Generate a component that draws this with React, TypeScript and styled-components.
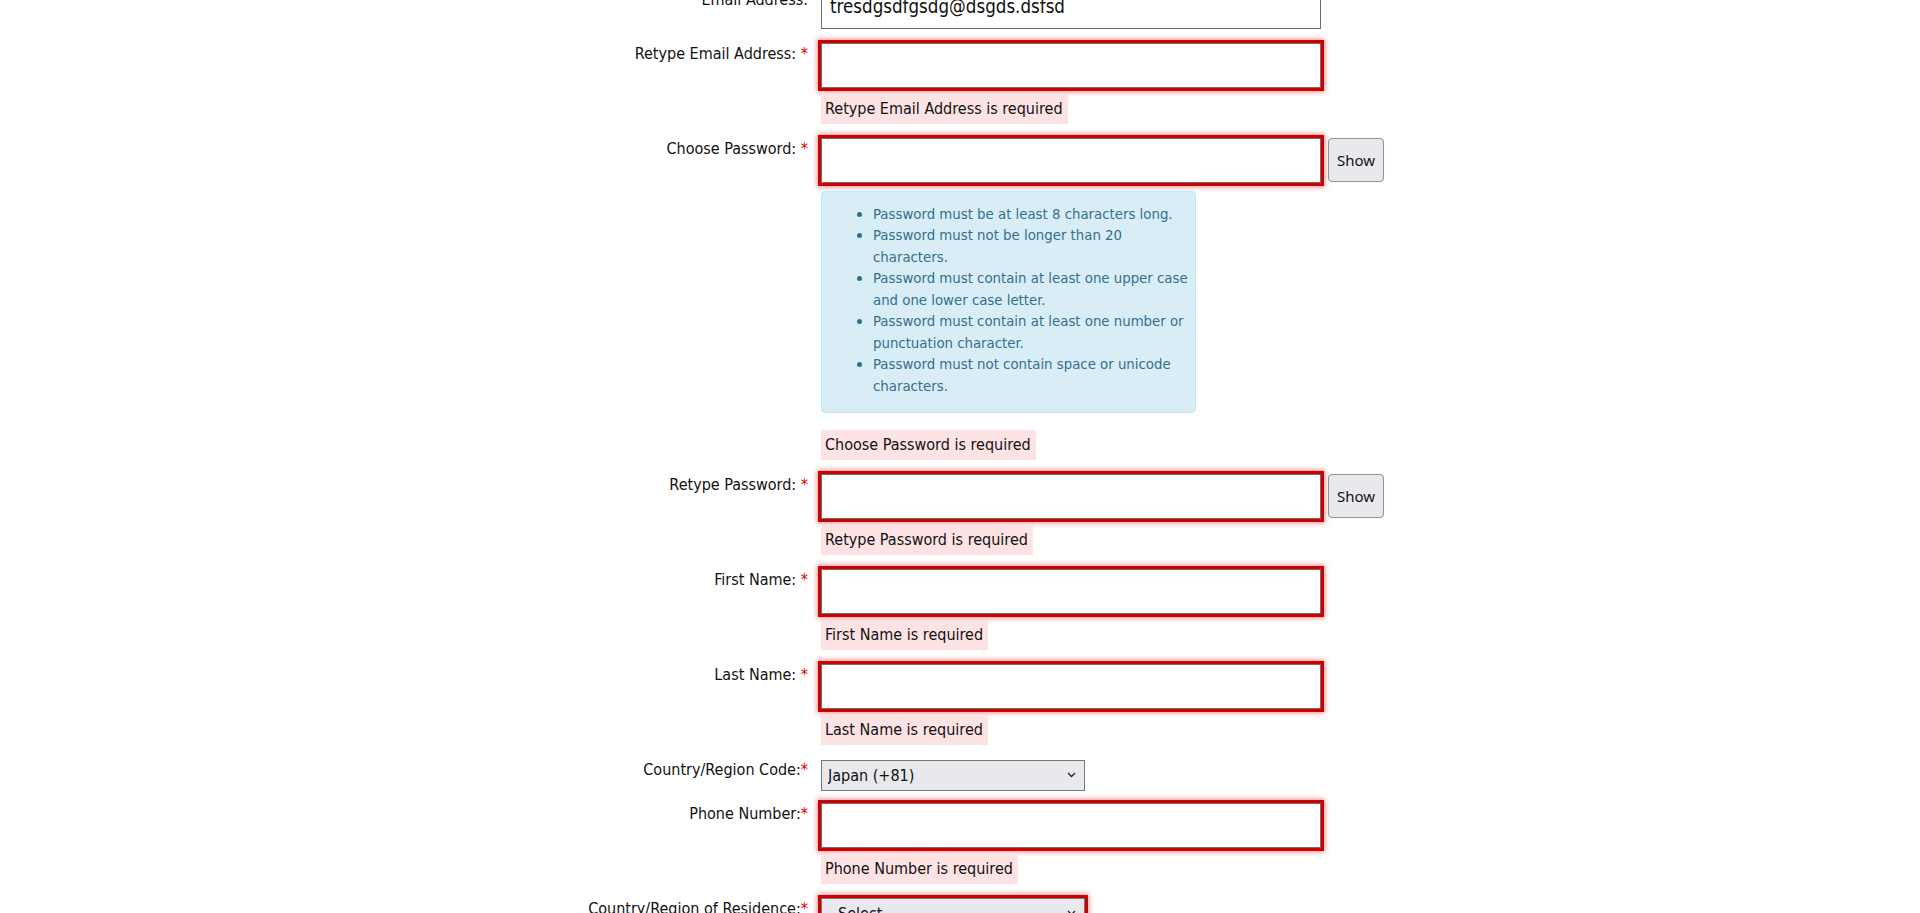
import React from "react";
import styled, { createGlobalStyle, css } from "styled-components";

const GlobalStyle = createGlobalStyle`
  html, body { margin: 0; padding: 0; background: #ffffff; }
  body {
    font-family: "DejaVu Sans Condensed", "DejaVu Sans", sans-serif;
    color: #111111;
    overflow: hidden;
  }
`;

const Page = styled.div`
  width: 1920px;
  height: 913px;
  overflow: hidden;
`;

const Form = styled.form`
  display: flex;
  flex-direction: column;
  margin-top: -16px;
`;

const Row = styled.div<{ $after?: number }>`
  display: grid;
  grid-template-columns: 808px auto;
  column-gap: 13px;
  align-items: start;
  margin-bottom: ${(p) => p.$after ?? 14}px;
`;

const Label = styled.label<{ $top?: number }>`
  text-align: right;
  font-size: 16px;
  line-height: 22px;
  padding-top: ${(p) => p.$top ?? 0}px;
  color: #111111;
`;

const Req = styled.span`
  color: #e00000;
`;

const Field = styled.div`
  display: flex;
  flex-direction: column;
  align-items: flex-start;
  gap: 6px;
`;

const InputLine = styled.div`
  display: flex;
  align-items: flex-start;
  gap: 7px;
`;

const invalidRing = css`
  box-shadow: 0 0 0 3px #cf0000, 0 0 5px 4px rgba(214, 0, 0, 0.45);
`;

const TextInput = styled.input<{ $invalid?: boolean }>`
  box-sizing: border-box;
  width: 500px;
  height: 45px;
  border: 1px solid #6f6f6f;
  padding: 0 8px;
  font-family: inherit;
  font-size: 18.6px;
  color: #111111;
  background: #ffffff;
  outline: none;
  ${(p) => p.$invalid && invalidRing}
`;

const ShowButton = styled.button`
  box-sizing: border-box;
  width: 56px;
  height: 44px;
  padding: 0;
  background: #e9e9ed;
  border: 1px solid #8f8f9d;
  border-radius: 4px;
  font-family: "Noto Sans", "Open Sans", sans-serif;
  font-size: 15px;
  color: #111111;
`;

const Info = styled.div`
  box-sizing: border-box;
  width: 375px;
  margin: 2px 0 11px;
  padding: 11px 4px 6px 11px;
  background: #d9edf7;
  border: 1px solid #bce8f1;
  border-radius: 4px;
  color: #31708f;
  font-size: 14.8px;
  line-height: 21.43px;
`;

const RuleList = styled.ul`
  margin: 0 0 10px;
  padding-left: 40px;
`;

const ErrorMsg = styled.div`
  background: #fee3e4;
  padding: 3px 5px 3px 4px;
  font-size: 16px;
  line-height: 24px;
  color: #111111;
`;

const SelectWrap = styled.div<{ $invalid?: boolean; $top?: number }>`
  position: relative;
  width: 264px;
  margin-top: ${(p) => p.$top ?? 0}px;
  ${(p) => p.$invalid && invalidRing}
`;

const Select = styled.select<{ $pad?: number }>`
  appearance: none;
  -webkit-appearance: none;
  box-sizing: border-box;
  width: 100%;
  height: 31px;
  margin: 0;
  border: 1px solid #767676;
  background: #e9e9ed;
  padding: 0 24px 0 ${(p) => p.$pad ?? 6}px;
  font-family: inherit;
  font-size: 16px;
  color: #111111;
  outline: none;
`;

const Chevron = styled.svg`
  position: absolute;
  right: 9px;
  top: 12px;
  pointer-events: none;
`;

type TextRowProps = {
  label: string;
  spaced?: boolean;
  error?: string;
  withShow?: boolean;
  value?: string;
  invalid?: boolean;
  children?: React.ReactNode;
};

function TextRow({ label, spaced = true, error, withShow, value, invalid = true, children }: TextRowProps) {
  return (
    <Row>
      <Label>
        {label}
        {spaced ? " " : ""}
        <Req>*</Req>
      </Label>
      <Field>
        <InputLine>
          <TextInput $invalid={invalid} defaultValue={value} />
          {withShow && <ShowButton type="button">Show</ShowButton>}
        </InputLine>
        {children}
        {error && <ErrorMsg>{error}</ErrorMsg>}
      </Field>
    </Row>
  );
}

function ChevronIcon() {
  return (
    <Chevron width="9" height="6" viewBox="0 0 9 6">
      <path d="M1 1 L4.5 4.5 L8 1" fill="none" stroke="#222" strokeWidth="1.3" />
    </Chevron>
  );
}

const rules = [
  "Password must be at least 8 characters long.",
  "Password must not be longer than 20 characters.",
  "Password must contain at least one upper case and one lower case letter.",
  "Password must contain at least one number or punctuation character.",
  "Password must not contain space or unicode characters.",
];

export default function App() {
  return (
    <Page>
      <GlobalStyle />
      <Form onSubmit={(e) => e.preventDefault()}>
        <Row>
          <Label $top={5}>Email Address:</Label>
          <Field>
            <TextInput defaultValue="tresdgsdfgsdg@dsgds.dsfsd" />
          </Field>
        </Row>
        <TextRow label="Retype Email Address:" error="Retype Email Address is required" />
        <TextRow label="Choose Password:" withShow error="Choose Password is required">
          <Info>
            <RuleList>
              {rules.map((r) => (
                <li key={r}>{r}</li>
              ))}
            </RuleList>
          </Info>
        </TextRow>
        <TextRow label="Retype Password:" withShow error="Retype Password is required" />
        <TextRow label="First Name:" error="First Name is required" />
        <TextRow label="Last Name:" error="Last Name is required" />
        <Row $after={12}>
          <Label>
            Country/Region Code:<Req>*</Req>
          </Label>
          <Field>
            <SelectWrap $top={1}>
              <Select defaultValue="jp">
                <option value="jp">Japan (+81)</option>
              </Select>
              <ChevronIcon />
            </SelectWrap>
          </Field>
        </Row>
        <TextRow label="Phone Number:" spaced={false} error="Phone Number is required" />
        <Row>
          <Label>
            Country/Region of Residence:<Req>*</Req>
          </Label>
          <Field>
            <SelectWrap $invalid>
              <Select $pad={16} defaultValue="">
                <option value="">Select</option>
              </Select>
              <ChevronIcon />
            </SelectWrap>
          </Field>
        </Row>
      </Form>
    </Page>
  );
}
